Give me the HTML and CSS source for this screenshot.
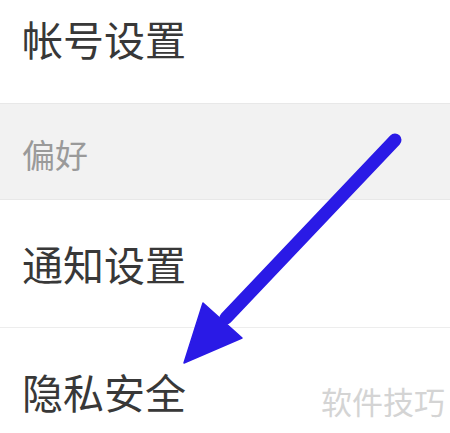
FILE: index.html
```html
<!DOCTYPE html>
<html lang="zh-CN">
<head>
    <meta charset="UTF-8">
    <meta name="viewport" content="width=device-width, initial-scale=1.0">
    <title>设置</title>
    <link rel="stylesheet" href="styles.css">
</head>
<body>
    <div class="settings">
        <div class="row first">
            <span class="label">帐号设置</span>
        </div>

        <div class="section">偏好</div>

        <div class="row">
            <span class="label">通知设置</span>
        </div>
        <div class="row divided">
            <span class="label">隐私安全</span>
        </div>
    </div>

    <div class="watermark">软件技巧</div>

    <svg class="arrow" width="450" height="433" viewBox="0 0 450 433">
        <line x1="395" y1="140" x2="226" y2="318" stroke="#2a1ae6" stroke-width="13" stroke-linecap="round"/>
        <polygon points="184,363 203,303 242,338" fill="#2a1ae6" stroke="#2a1ae6" stroke-width="1.5" stroke-linejoin="round"/>
    </svg>
</body>
</html>
```

FILE: styles.css
```css
/* General Styling */
body {
    margin: 0;
    background: #fff;
    font-family: "Noto Sans CJK SC", "Noto Sans", sans-serif;
    overflow: hidden;
}

.settings {
    display: flex;
    flex-direction: column;
}

.row {
    height: 127px;
    display: flex;
    align-items: center;
    padding-left: 22px;
    flex-shrink: 0;
}

.row.first {
    margin-top: -24px;
    padding-bottom: 2px;
    box-sizing: border-box;
}

.row.divided {
    border-top: 1px solid #ededed;
    box-sizing: border-box;
}

.label {
    font-size: 41px;
    color: #383838;
    line-height: 1;
}

.section {
    height: 97px;
    box-sizing: border-box;
    display: flex;
    align-items: center;
    padding: 4px 0 0 22px;
    background: #f2f2f2;
    border-top: 1px solid #e8e8e8;
    border-bottom: 1px solid #e8e8e8;
    font-size: 33px;
    color: #9a9a9a;
}

.watermark {
    position: absolute;
    right: 5px;
    top: 378px;
    font-size: 31px;
    color: #d4d4d4;
}

.arrow {
    position: absolute;
    left: 0;
    top: 0;
}
```
